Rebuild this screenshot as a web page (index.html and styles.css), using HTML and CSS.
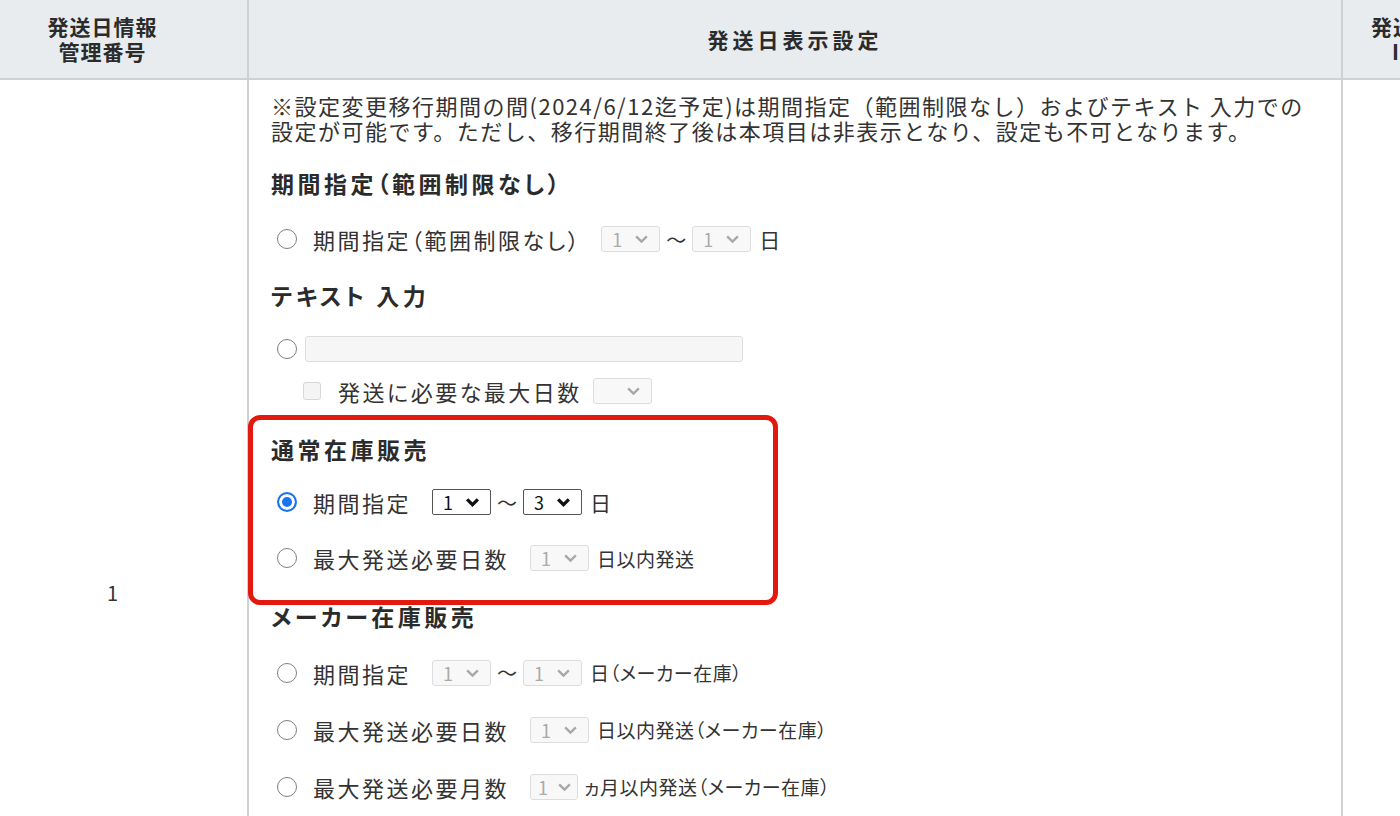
FILE: index.html
```html
<!DOCTYPE html>
<html lang="ja">
<head>
  <meta charset="UTF-8">
  <meta name="viewport" content="width=device-width, initial-scale=1.0">
  <title>発送日表示設定</title>
  <link rel="stylesheet" href="styles.css">
</head>

<body>
  <table class="ship-table">
    <colgroup>
      <col class="ship-col-no">
      <col class="ship-col-setting">
      <col class="ship-col-next">
    </colgroup>
    <thead>
      <tr>
        <th class="ship-th-no">発送日情報<br>管理番号</th>
        <th class="ship-th-setting">発送日表示設定</th>
        <th class="ship-th-next">発送日情報<br>ID番号</th>
      </tr>
    </thead>
    <tbody>
      <tr class="ship-row">
        <td class="ship-cell-no">1</td>
        <td class="ship-cell-setting">

          <p class="ship-note">※設定変更移行期間の間(2024/6/12迄予定)は期間指定（範囲制限なし）およびテキスト 入力での<br>設定が可能です。ただし、移行期間終了後は本項目は非表示となり、設定も不可となります。</p>

          <div class="ship-group ship-group-first">
            <h3 class="ship-group-title">期間指定（範囲制限なし）</h3>
            <label class="ship-opt">
              <input type="radio" name="ship-type" class="ship-radio">
              <span class="ship-opt-label ship-opt-label-wide">期間指定（範囲制限なし）</span>
              <span class="ship-sel is-disabled"><span>1</span><svg viewBox="0 0 14 9"><path d="M2 2l5 5 5-5"/></svg></span>
              <span class="ship-tilde">〜</span>
              <span class="ship-sel is-disabled"><span>1</span><svg viewBox="0 0 14 9"><path d="M2 2l5 5 5-5"/></svg></span>
              <span class="ship-unit ship-unit-day">日</span>
            </label>
          </div>

          <div class="ship-group">
            <h3 class="ship-group-title">テキスト 入力</h3>
            <div class="ship-opt ship-opt-text">
              <input type="radio" name="ship-type" class="ship-radio">
              <input type="text" class="ship-text" disabled>
            </div>
            <label class="ship-check-row">
              <input type="checkbox" class="ship-check" disabled>
              <span class="ship-check-label">発送に必要な最大日数</span>
              <span class="ship-sel is-disabled"><span></span><svg viewBox="0 0 14 9"><path d="M2 2l5 5 5-5"/></svg></span>
            </label>
          </div>

          <div class="ship-group ship-group-marked">
            <h3 class="ship-group-title ship-group-title-short">通常在庫販売</h3>
            <label class="ship-opt">
              <input type="radio" name="ship-type" class="ship-radio" checked>
              <span class="ship-opt-label">期間指定</span>
              <span class="ship-sel"><span>1</span><svg viewBox="0 0 14 9"><path d="M2 2l5 5 5-5"/></svg></span>
              <span class="ship-tilde">〜</span>
              <span class="ship-sel"><span>3</span><svg viewBox="0 0 14 9"><path d="M2 2l5 5 5-5"/></svg></span>
              <span class="ship-unit ship-unit-day">日</span>
            </label>
            <label class="ship-opt">
              <input type="radio" name="ship-type" class="ship-radio">
              <span class="ship-opt-label">最大発送必要日数</span>
              <span class="ship-sel is-disabled"><span>1</span><svg viewBox="0 0 14 9"><path d="M2 2l5 5 5-5"/></svg></span>
              <span class="ship-unit">日以内発送</span>
            </label>
            <div class="ship-mark"></div>
          </div>

          <div class="ship-group ship-group-maker">
            <h3 class="ship-group-title">メーカー在庫販売</h3>
            <label class="ship-opt ship-opt-tall">
              <input type="radio" name="ship-type" class="ship-radio">
              <span class="ship-opt-label">期間指定</span>
              <span class="ship-sel is-disabled"><span>1</span><svg viewBox="0 0 14 9"><path d="M2 2l5 5 5-5"/></svg></span>
              <span class="ship-tilde">〜</span>
              <span class="ship-sel is-disabled"><span>1</span><svg viewBox="0 0 14 9"><path d="M2 2l5 5 5-5"/></svg></span>
              <span class="ship-unit">日（メーカー在庫）</span>
            </label>
            <label class="ship-opt ship-opt-tall">
              <input type="radio" name="ship-type" class="ship-radio">
              <span class="ship-opt-label">最大発送必要日数</span>
              <span class="ship-sel is-disabled"><span>1</span><svg viewBox="0 0 14 9"><path d="M2 2l5 5 5-5"/></svg></span>
              <span class="ship-unit">日以内発送（メーカー在庫）</span>
            </label>
            <label class="ship-opt ship-opt-tall">
              <input type="radio" name="ship-type" class="ship-radio">
              <span class="ship-opt-label">最大発送必要月数</span>
              <span class="ship-sel ship-sel-narrow is-disabled"><span>1</span><svg viewBox="0 0 14 9"><path d="M2 2l5 5 5-5"/></svg></span>
              <span class="ship-unit ship-unit-tight">ヵ月以内発送（メーカー在庫）</span>
            </label>
          </div>

        </td>
        <td class="ship-cell-next"></td>
      </tr>
    </tbody>
  </table>
</body>

</html>
```

FILE: styles.css
```css
* {
  box-sizing: border-box;
}

body {
  margin: 0;
  overflow: hidden;
  background-color: #ffffff;
  color: #333333;
  font-family: "Noto Sans CJK JP", "Noto Sans", sans-serif;
  font-feature-settings: "palt";
}

.ship-table {
  width: 1510px;
  border-collapse: collapse;
  table-layout: fixed;
}

.ship-col-no {
  width: 248px;
}
.ship-col-setting {
  width: 1094px;
}
.ship-col-next {
  width: 168px;
}

.ship-table th,
.ship-table td {
  padding: 0;
  border: 2px solid #cdd1d4;
}
.ship-table tr > :first-child {
  border-left: none;
}
.ship-table thead th {
  border-top: none;
}

.ship-table th {
  height: 79px;
  background-color: #e9ecee;
  color: #2b2b2b;
  font-size: 21px;
  font-weight: bold;
  line-height: 25px;
  text-align: center;
  letter-spacing: 1px;
}

.ship-table .ship-th-no {
  padding-right: 42px;
}

.ship-table .ship-th-setting {
  letter-spacing: 4px;
}

.ship-row {
  height: 1026px;
}

.ship-table .ship-cell-no {
  padding-right: 22px;
  font-size: 20px;
  text-align: center;
  vertical-align: middle;
}

.ship-table .ship-cell-setting {
  padding: 13px 22px 0 22px;
  vertical-align: top;
}

.ship-note {
  margin: 0;
  font-size: 22px;
  font-feature-settings: normal;
  line-height: 25px;
  letter-spacing: 1.5px;
  white-space: nowrap;
}

.ship-group-first {
  margin-top: 12px;
}

.ship-group-title {
  display: flex;
  align-items: center;
  height: 56px;
  margin: 0;
  color: #2b2b2b;
  font-size: 23px;
  font-weight: bold;
  letter-spacing: 3.5px;
}
.ship-group-title-short {
  height: 50px;
}

.ship-opt {
  display: flex;
  align-items: center;
  height: 56px;
  font-size: 22px;
  letter-spacing: 2.5px;
  white-space: nowrap;
}
.ship-opt-tall {
  height: 57px;
}

.ship-radio {
  appearance: none;
  flex: none;
  width: 20px;
  height: 20px;
  margin: 0 16px 0 6px;
  border: 1.5px solid #808080;
  border-radius: 50%;
  background-color: #ffffff;
}
.ship-radio:checked {
  border: 2px solid #1a73f0;
  background-color: #1a73f0;
  box-shadow: inset 0 0 0 3px #ffffff;
}

.ship-opt-label {
  margin-right: 21px;
}
.ship-opt-label-wide {
  margin-right: 20px;
}

.ship-sel {
  display: flex;
  flex: none;
  align-items: center;
  justify-content: space-between;
  width: 59px;
  height: 26px;
  padding: 0 10px 0 10px;
  border: 1px solid #555555;
  border-radius: 2px;
  background-color: #ffffff;
  color: #111111;
  font-size: 18px;
  letter-spacing: 0;
}
.ship-sel svg {
  width: 15px;
  height: 10px;
  fill: none;
  stroke: #111111;
  stroke-width: 3;
}
.ship-sel.is-disabled {
  border-color: #dddddd;
  border-radius: 3px;
  background-color: #f8f8f8;
  color: #aaaaaa;
}
.ship-sel.is-disabled svg {
  stroke: #a8a8a8;
  stroke-width: 2.2;
}
.ship-sel-narrow {
  width: 48px;
  padding: 0 5px 0 7px;
}

.ship-tilde {
  margin: 0 6px;
  font-size: 20px;
  letter-spacing: 0;
}

.ship-unit {
  margin-left: 8px;
  font-size: 19px;
  letter-spacing: 0.5px;
}
.ship-unit-day {
  font-size: 21px;
}
.ship-unit-tight {
  margin-left: 6px;
}

.ship-opt-text {
  height: 52px;
}
.ship-opt-text .ship-radio {
  margin-right: 8px;
}

.ship-text {
  width: 438px;
  height: 26px;
  border: 1px solid #dddddd;
  border-radius: 3px;
  background-color: #f6f6f6;
}

.ship-check-row {
  display: flex;
  align-items: center;
  height: 32px;
  padding-left: 32px;
  font-size: 22px;
  letter-spacing: 2.5px;
}

.ship-check {
  appearance: none;
  flex: none;
  width: 18px;
  height: 18px;
  margin: 0 17px 0 0;
  border: 1px solid #d6d6d6;
  border-radius: 3px;
  background-color: #f4f4f4;
}

.ship-check-label {
  margin-right: 11px;
}

.ship-group-marked {
  position: relative;
  margin-top: 17px;
}

.ship-mark {
  position: absolute;
  top: -9px;
  left: -23px;
  width: 530px;
  height: 190px;
  border: 5px solid #e3190f;
  border-radius: 12px;
  pointer-events: none;
}

.ship-group-maker {
  margin-top: 2px;
}
```
